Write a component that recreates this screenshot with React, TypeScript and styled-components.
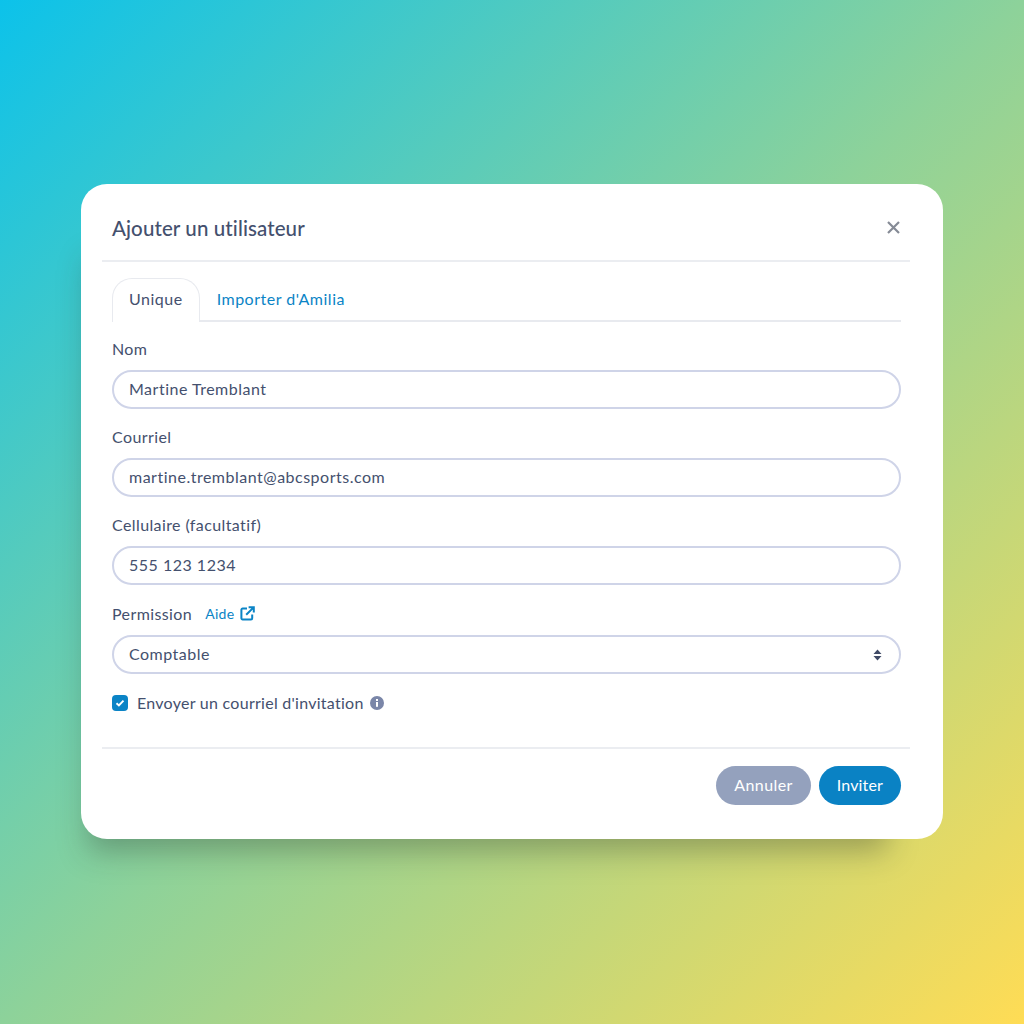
import React from 'react';
import styled, { createGlobalStyle } from 'styled-components';

const fields = [
  { label: 'Nom', value: 'Martine Tremblant' },
  { label: 'Courriel', value: 'martine.tremblant@abcsports.com' },
  { label: 'Cellulaire (facultatif)', value: '555 123 1234' },
];

const App: React.FC = () => (
  <Page>
    <GlobalStyle />
    <Modal>
      <Header>
        <Title>Ajouter un utilisateur</Title>
        <CloseButton aria-label="Fermer">
          <svg width="13" height="13" viewBox="0 0 13 13">
            <path d="M1 1 12 12M12 1 1 12" stroke="#868b96" strokeWidth="2.2" fill="none" />
          </svg>
        </CloseButton>
      </Header>
      <Body>
        <Tabs>
          <Tab active>Unique</Tab>
          <Tab>Importer d'Amilia</Tab>
        </Tabs>
        {fields.map(field => (
          <Field key={field.label}>
            <LabelRow>
              <Label>{field.label}</Label>
            </LabelRow>
            <Input type="text" defaultValue={field.value} />
          </Field>
        ))}
        <PermissionField>
          <LabelRow>
            <Label>Permission</Label>
            <HelpLink>
              Aide
              <svg width="15" height="15" viewBox="0 0 15 15" fill="none" stroke="#0b84c6" strokeWidth="2">
                <path d="M7 2.6H2.6A1.2 1.2 0 0 0 1.4 3.8v8.4a1.2 1.2 0 0 0 1.2 1.2H11a1.2 1.2 0 0 0 1.2-1.2V8.4" />
                <path d="M6.2 8.8 13.4 1.6M8.6 1.2h5.2v5.2" />
              </svg>
            </HelpLink>
          </LabelRow>
          <SelectBox>
            <SelectValue>Comptable</SelectValue>
            <svg width="9" height="12" viewBox="0 0 9 12" fill="#3f4a66">
              <path d="M4.5 0.5 8.5 5H0.5ZM4.5 11.5 0.5 7H8.5Z" />
            </svg>
          </SelectBox>
        </PermissionField>
        <CheckRow>
          <CheckBox>
            <svg width="10" height="8" viewBox="0 0 10 8" fill="none" stroke="#fff" strokeWidth="1.9">
              <path d="M1.5 4.2 3.9 6.4 8.5 1.6" />
            </svg>
          </CheckBox>
          <CheckLabel>Envoyer un courriel d'invitation</CheckLabel>
          <InfoIcon>
            <svg width="14" height="14" viewBox="0 0 14 14">
              <circle cx="7" cy="7" r="7" fill="#7a86a8" />
              <rect x="6" y="6" width="2" height="4.8" fill="#fff" />
              <rect x="6" y="3" width="2" height="2" fill="#fff" />
            </svg>
          </InfoIcon>
        </CheckRow>
      </Body>
      <Footer>
        <Button>Annuler</Button>
        <Button primary>Inviter</Button>
      </Footer>
    </Modal>
  </Page>
);

export default App;

// Styled components

const GlobalStyle = createGlobalStyle`
  * {
    box-sizing: border-box;
  }

  body {
    margin: 0;
    font-family: Lato, "Noto Sans", sans-serif;
    font-variant-ligatures: none;
  }
`;

const Page = styled.div`
  width: 1024px;
  height: 1024px;
  padding-top: 184px;
  padding-left: 81px;
  overflow: hidden;
  background: linear-gradient(135deg, #0cc2ea 0%, #8dd29a 50%, #ffdc55 100%);
`;

const Modal = styled.div`
  width: 862px;
  height: 655px;
  padding: 0 33px 0 21px;
  background: #fff;
  border-radius: 26px;
  box-shadow: -24px 44px 28px -32px rgba(40, 50, 40, 0.34);
`;

const Header = styled.div`
  display: flex;
  align-items: center;
  justify-content: space-between;
  height: 78px;
  padding: 12px 10px 0 10px;
  border-bottom: 2px solid #ebedf1;
`;

const Title = styled.h2`
  margin: 0;
  font-size: 20.5px;
  font-weight: 500;
  letter-spacing: 0.1px;
  color: #44506e;
`;

const CloseButton = styled.button`
  display: flex;
  margin-bottom: 2px;
  padding: 0;
  border: none;
  background: none;
`;

const Body = styled.div`
  height: 487px;
  padding: 16px 9px 0 10px;
  border-bottom: 2px solid #ebedf1;
`;

const Tabs = styled.div`
  display: flex;
  align-items: flex-start;
  height: 44px;
  border-bottom: 2px solid #e8eaef;
`;

const Tab = styled.div<{ active?: boolean }>`
  display: flex;
  align-items: center;
  justify-content: center;
  height: ${props => (props.active ? '44px' : '42px')};
  padding: ${props => (props.active ? '0 16px 4px' : '0 17px 2px 16px')};
  font-size: 16px;
  letter-spacing: 0.5px;
  color: ${props => (props.active ? '#44506e' : '#0b84c6')};
  background: #fff;
  border: 1px solid ${props => (props.active ? '#e8eaef' : 'transparent')};
  border-bottom: none;
  border-radius: 20px 20px 0 0;
`;

const Field = styled.div`
  margin-top: 17px;

  & + & {
    margin-top: 18px;
  }
`;

const PermissionField = styled.div`
  margin-top: 19px;
`;

const LabelRow = styled.div`
  display: flex;
  align-items: center;
  gap: 13px;
  height: 22px;
  padding-bottom: 3px;
  margin-bottom: 9px;
`;

const Label = styled.label`
  font-size: 16px;
  letter-spacing: 0.4px;
  color: #44506e;
`;

const CheckLabel = styled(Label)`
  padding-bottom: 2px;
  letter-spacing: 0.27px;
`;

const HelpLink = styled.a`
  display: flex;
  align-items: center;
  gap: 6px;
  font-size: 14px;
  letter-spacing: 0.3px;
  color: #0b84c6;
`;

const Input = styled.input`
  display: block;
  width: 100%;
  height: 39px;
  padding: 0 15px 3px;
  font-family: inherit;
  font-variant-ligatures: none;
  font-size: 16px;
  letter-spacing: 0.5px;
  color: #44506e;
  background: #fff;
  border: 2px solid #cfd4e8;
  border-radius: 20px;
  outline: none;
`;

const SelectBox = styled.div`
  display: flex;
  align-items: center;
  justify-content: space-between;
  height: 39px;
  padding: 0 17px 0 15px;
  border: 2px solid #cfd4e8;
  border-radius: 20px;
`;

const SelectValue = styled.span`
  padding-bottom: 3px;
  font-size: 16px;
  letter-spacing: 0.5px;
  color: #44506e;
`;

const CheckRow = styled.div`
  display: flex;
  align-items: center;
  height: 22px;
  margin-top: 18px;
`;

const CheckBox = styled.span`
  display: flex;
  align-items: center;
  justify-content: center;
  width: 16px;
  height: 16px;
  margin-right: 9px;
  background: #0b84c6;
  border-radius: 4px;
`;

const InfoIcon = styled.span`
  display: flex;
  margin-left: 6px;
`;

const Footer = styled.div`
  display: flex;
  justify-content: flex-end;
  gap: 8px;
  padding: 17px 9px 0 0;
`;

const Button = styled.button<{ primary?: boolean }>`
  height: 39px;
  padding: 0 18px 2px;
  font-family: inherit;
  font-variant-ligatures: none;
  font-size: 16px;
  letter-spacing: ${props => (props.primary ? '0.15px' : '0.4px')};
  color: #fff;
  background: ${props => (props.primary ? '#0a82c4' : '#94a1bd')};
  border: none;
  border-radius: 20px;
`;
